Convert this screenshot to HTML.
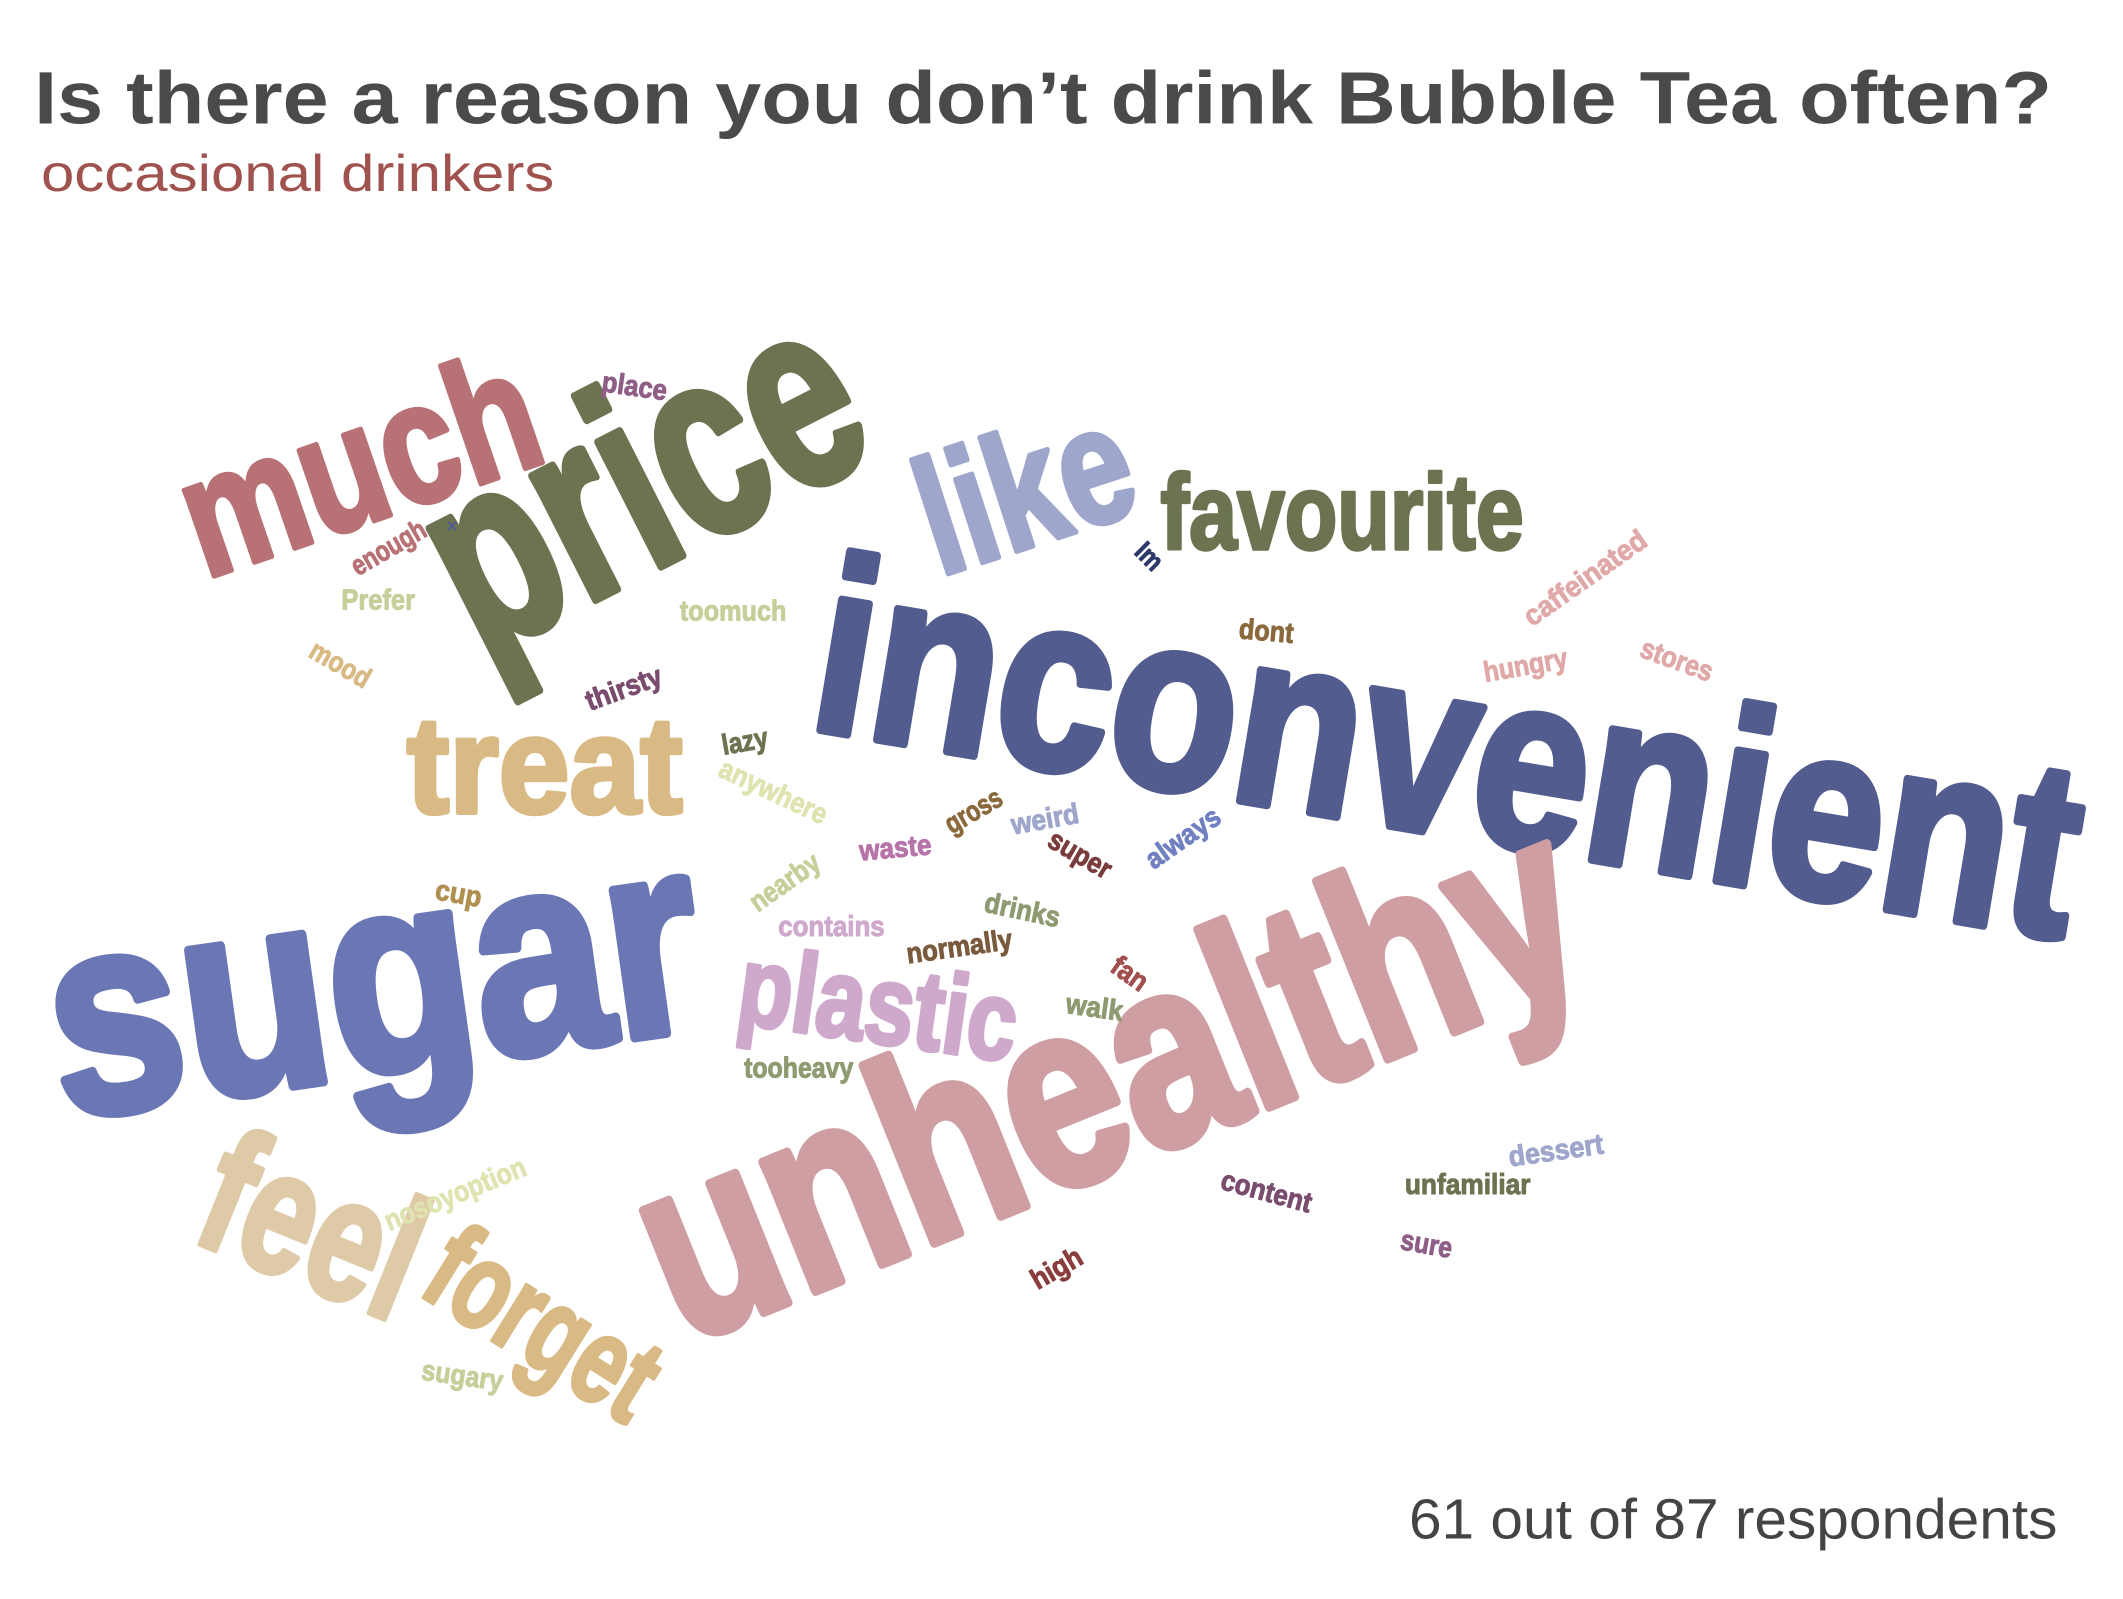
<!DOCTYPE html>
<html><head><meta charset="utf-8"><style>
html,body{margin:0;padding:0;background:#fff;}
svg{display:block}
.w{font-family:"Liberation Sans Narrow","Liberation Sans",sans-serif;font-weight:bold;}
</style></head><body>
<svg width="2123" height="1599" viewBox="0 0 1555 1165" preserveAspectRatio="none" xmlns="http://www.w3.org/2000/svg">
<text x="25" y="90" font-family="Liberation Sans, sans-serif" font-weight="bold" font-size="54" fill="#4a4a4a" textLength="1478" lengthAdjust="spacingAndGlyphs">Is there a reason you don’t drink Bubble Tea often?</text>
<text x="30" y="139" font-family="Liberation Sans, sans-serif" font-size="38" fill="#a0524f" textLength="376" lengthAdjust="spacingAndGlyphs">occasional drinkers</text>
<text x="1032" y="1121" font-family="Liberation Sans, sans-serif" font-size="41" fill="#444" textLength="475" lengthAdjust="spacingAndGlyphs">61 out of 87 respondents</text>
<g class="w" stroke-linejoin="round">
<text transform="translate(150,422) rotate(-19)" font-size="125" fill="#b87174" stroke="#b87174" stroke-width="4" textLength="268" lengthAdjust="spacingAndGlyphs">much</text>
<text transform="translate(352,480) rotate(-27)" font-size="192" fill="#6b7350" stroke="#6b7350" stroke-width="6" textLength="330" lengthAdjust="spacingAndGlyphs">price</text>
<text transform="translate(688,420) rotate(-18)" font-size="120" fill="#9ea6cc" stroke="#9ea6cc" stroke-width="4" textLength="158" lengthAdjust="spacingAndGlyphs">like</text>
<text transform="translate(850,400)" font-size="78" fill="#6b7350" stroke="#6b7350" stroke-width="2.5" textLength="266" lengthAdjust="spacingAndGlyphs">favourite</text>
<text transform="translate(590,530) rotate(9.5)" font-size="182" fill="#525c8e" stroke="#525c8e" stroke-width="6" textLength="935" lengthAdjust="spacingAndGlyphs">inconvenient</text>
<text transform="translate(298,592)" font-size="100" fill="#d9b984" stroke="#d9b984" stroke-width="3.5" textLength="202" lengthAdjust="spacingAndGlyphs">treat</text>
<text transform="translate(45,815) rotate(-8)" font-size="205" fill="#6b77b5" stroke="#6b77b5" stroke-width="7" textLength="480" lengthAdjust="spacingAndGlyphs">sugar</text>
<text transform="translate(500,980) rotate(-22)" font-size="192" fill="#cf9ea2" stroke="#cf9ea2" stroke-width="7" textLength="725" lengthAdjust="spacingAndGlyphs">unhealthy</text>
<text transform="translate(138,903) rotate(22)" font-size="128" fill="#dfcaa8" stroke="#dfcaa8" stroke-width="4" textLength="162" lengthAdjust="spacingAndGlyphs">feel</text>
<text transform="translate(305,942) rotate(32)" font-size="90" fill="#d9b984" stroke="#d9b984" stroke-width="3" textLength="182" lengthAdjust="spacingAndGlyphs">forget</text>
<text transform="translate(538,745) rotate(8)" font-size="82" fill="#cfa9cc" stroke="#cfa9cc" stroke-width="3" textLength="205" lengthAdjust="spacingAndGlyphs">plastic</text>
<g font-size="21" stroke-width="0.7">
<text transform="translate(440,285) rotate(8)" fill="#8e5e87" stroke="#8e5e87" textLength="48" lengthAdjust="spacingAndGlyphs">place</text>
<text transform="translate(262,420) rotate(-30)" fill="#b87174" stroke="#b87174" textLength="60" lengthAdjust="spacingAndGlyphs">enough</text>
<text transform="translate(327,388)" font-size="14" fill="#525c8e">×</text>
<text transform="translate(250,444)" fill="#c6cf9a" stroke="#c6cf9a" textLength="54" lengthAdjust="spacingAndGlyphs">Prefer</text>
<text transform="translate(498,452)" fill="#c6cf9a" stroke="#c6cf9a" textLength="78" lengthAdjust="spacingAndGlyphs">toomuch</text>
<text transform="translate(225,478) rotate(30)" fill="#d9b984" stroke="#d9b984" textLength="48" lengthAdjust="spacingAndGlyphs">mood</text>
<text transform="translate(432,518) rotate(-20)" fill="#7a4c6e" stroke="#7a4c6e" textLength="58" lengthAdjust="spacingAndGlyphs">thirsty</text>
<text transform="translate(530,550) rotate(-10)" fill="#6b7350" stroke="#6b7350" textLength="34" lengthAdjust="spacingAndGlyphs">lazy</text>
<text transform="translate(525,565) rotate(25)" fill="#dfe3b0" stroke="#dfe3b0" textLength="85" lengthAdjust="spacingAndGlyphs">anywhere</text>
<text transform="translate(697,608) rotate(-30)" fill="#8a6a3d" stroke="#8a6a3d" textLength="45" lengthAdjust="spacingAndGlyphs">gross</text>
<text transform="translate(742,608) rotate(-10)" fill="#9ea6cc" stroke="#9ea6cc" textLength="50" lengthAdjust="spacingAndGlyphs">weird</text>
<text transform="translate(630,627) rotate(-5)" fill="#b774a9" stroke="#b774a9" textLength="53" lengthAdjust="spacingAndGlyphs">waste</text>
<text transform="translate(766,616) rotate(30)" fill="#7a3d3d" stroke="#7a3d3d" textLength="50" lengthAdjust="spacingAndGlyphs">super</text>
<text transform="translate(845,634) rotate(-35)" fill="#7080c0" stroke="#7080c0" textLength="62" lengthAdjust="spacingAndGlyphs">always</text>
<text transform="translate(318,655) rotate(10)" fill="#b09050" stroke="#b09050" textLength="34" lengthAdjust="spacingAndGlyphs">cup</text>
<text transform="translate(555,665) rotate(-35)" fill="#c6cf9a" stroke="#c6cf9a" textLength="58" lengthAdjust="spacingAndGlyphs">nearby</text>
<text transform="translate(720,664) rotate(12)" fill="#8e9a70" stroke="#8e9a70" textLength="56" lengthAdjust="spacingAndGlyphs">drinks</text>
<text transform="translate(570,682)" fill="#cfa9cc" stroke="#cfa9cc" textLength="78" lengthAdjust="spacingAndGlyphs">contains</text>
<text transform="translate(665,702) rotate(-8)" fill="#7a5a3d" stroke="#7a5a3d" textLength="78" lengthAdjust="spacingAndGlyphs">normally</text>
<text transform="translate(812,707) rotate(35)" fill="#a14f4f" stroke="#a14f4f" textLength="28" lengthAdjust="spacingAndGlyphs">fan</text>
<text transform="translate(780,738) rotate(8)" fill="#8e9a70" stroke="#8e9a70" textLength="42" lengthAdjust="spacingAndGlyphs">walk</text>
<text transform="translate(545,785)" fill="#8e9a70" stroke="#8e9a70" textLength="80" lengthAdjust="spacingAndGlyphs">tooheavy</text>
<text transform="translate(285,897) rotate(-22)" fill="#dfe3b0" stroke="#dfe3b0" textLength="110" lengthAdjust="spacingAndGlyphs">nosoyoption</text>
<text transform="translate(760,940) rotate(-30)" fill="#8a3d3d" stroke="#8a3d3d" textLength="40" lengthAdjust="spacingAndGlyphs">high</text>
<text transform="translate(893,866) rotate(15)" fill="#7a4c6e" stroke="#7a4c6e" textLength="68" lengthAdjust="spacingAndGlyphs">content</text>
<text transform="translate(1029,870)" fill="#6b7350" stroke="#6b7350" textLength="92" lengthAdjust="spacingAndGlyphs">unfamiliar</text>
<text transform="translate(1106,850) rotate(-8)" fill="#9ea6cc" stroke="#9ea6cc" textLength="70" lengthAdjust="spacingAndGlyphs">dessert</text>
<text transform="translate(1025,910) rotate(10)" fill="#8e5e87" stroke="#8e5e87" textLength="38" lengthAdjust="spacingAndGlyphs">sure</text>
<text transform="translate(308,1005) rotate(8)" fill="#c6cf9a" stroke="#c6cf9a" textLength="60" lengthAdjust="spacingAndGlyphs">sugary</text>
<text transform="translate(830,403) rotate(45)" font-size="20" fill="#2d3a6a" stroke="#2d3a6a" textLength="20" lengthAdjust="spacingAndGlyphs">Im</text>
<text transform="translate(907,465) rotate(5)" fill="#8a6a3d" stroke="#8a6a3d" textLength="40" lengthAdjust="spacingAndGlyphs">dont</text>
<text transform="translate(1122,457) rotate(-35)" fill="#e0a8a8" stroke="#e0a8a8" textLength="105" lengthAdjust="spacingAndGlyphs">caffeinated</text>
<text transform="translate(1088,497) rotate(-10)" fill="#e0a8a8" stroke="#e0a8a8" textLength="62" lengthAdjust="spacingAndGlyphs">hungry</text>
<text transform="translate(1200,478) rotate(20)" fill="#e0a8a8" stroke="#e0a8a8" textLength="55" lengthAdjust="spacingAndGlyphs">stores</text>
</g>
</g>
</svg>
</body></html>
